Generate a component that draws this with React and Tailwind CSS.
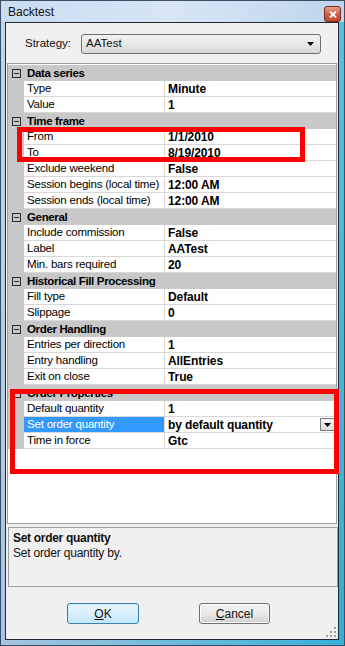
import React from 'react';

const sections = [
    { title: 'Data series', rows: [['Type', 'Minute'], ['Value', '1']] },
    {
        title: 'Time frame',
        rows: [
            ['From', '1/1/2010'],
            ['To', '8/19/2010'],
            ['Exclude weekend', 'False'],
            ['Session begins (local time)', '12:00 AM'],
            ['Session ends (local time)', '12:00 AM'],
        ],
    },
    { title: 'General', rows: [['Include commission', 'False'], ['Label', 'AATest'], ['Min. bars required', '20']] },
    { title: 'Historical Fill Processing', rows: [['Fill type', 'Default'], ['Slippage', '0']] },
    { title: 'Order Handling', rows: [['Entries per direction', '1'], ['Entry handling', 'AllEntries'], ['Exit on close', 'True']] },
    {
        title: 'Order Properties',
        rows: [['Default quantity', '1'], ['Set order quantity', 'by default quantity', true], ['Time in force', 'Gtc']],
    },
];

const CategoryRow = ({ title }) => (
    <div className="flex h-[16px] items-center bg-[#c8c8c8]">
        <div className="flex w-[16px] justify-center pl-[1px]">
            <div className="flex h-[9px] w-[9px] items-center justify-center border border-[#2b2b2b] bg-[#c8c8c8]">
                <div className="h-[1px] w-[5px] bg-[#2b2b2b]"></div>
            </div>
        </div>
        <span className="pl-[3px] pt-[1px] text-[11.5px] font-bold tracking-[-0.35px] text-black">{title}</span>
    </div>
);

const PropRow = ({ label, value, selected }) => (
    <div className="flex h-[16px]">
        <div className="w-[16px] bg-[#c8c8c8]"></div>
        <div
            className={`flex w-[140px] items-center border-b border-[#d8d8d8] pl-[3px] pt-[1px] text-[11.5px] tracking-[-0.2px] ${
                selected ? 'bg-[#3399ff] text-white' : 'bg-white text-black'
            }`}
        >
            {label}
        </div>
        <div className="w-[1px] bg-[#d8d8d8]"></div>
        <div className="flex flex-1 items-center justify-between border-b border-[#d8d8d8] bg-white pl-[3px] text-[12px] font-bold tracking-[-0.1px] text-black">
            <span className="pt-[1px]">{value}</span>
            {selected && (
                <div className="mr-[1px] flex h-[13px] w-[15px] items-center justify-center border border-[#7a7a7a] bg-gradient-to-b from-[#f4f4f4] to-[#dcdcdc]">
                    <svg width="7" height="4" viewBox="0 0 7 4">
                        <path d="M0 0h7L3.5 4z" fill="#000" />
                    </svg>
                </div>
            )}
        </div>
    </div>
);

const App = () => {
    return (
        <div
            className="relative flex h-[646px] w-[345px] flex-col overflow-hidden border border-[#3a4f66] bg-[#c4d9ee] text-black"
            style={{ fontFamily: '"Liberation Sans", Arial, sans-serif' }}
        >
            {/* title bar */}
            <div className="flex h-[21px] items-center justify-between bg-gradient-to-r from-[#c9dcf0] via-[#d8e6f4] to-[#bfd5ec] pl-[7px] pr-[3px]">
                <span className="text-[12px] text-[#111]">Backtest</span>
                <div className="mt-[5px] flex h-[16px] w-[17px] items-center justify-center rounded-[3px] border border-[#7a2a1a] bg-gradient-to-b from-[#e8a08c] via-[#d0604a] to-[#c24a30]">
                    <svg width="8" height="7" viewBox="0 0 8 7">
                        <path d="M1 0.5l6 6M7 0.5l-6 6" stroke="#fff" strokeWidth="1.8" />
                    </svg>
                </div>
            </div>

            <div className="flex flex-1">
                <div className="w-[4px] bg-gradient-to-b from-[#c0d6ec] to-[#a8c4de]"></div>

                {/* client area */}
                <div className="flex w-[334px] flex-col border border-[#1f2a36] bg-[#f0f0f0]">
                    {/* strategy */}
                    <div className="mt-[11px] flex h-[20px] items-center">
                        <span className="w-[75px] pl-[19px] text-[11.5px] text-[#111]">Strategy:</span>
                        <div className="flex h-[20px] w-[240px] items-center justify-between rounded-[3px] border border-[#707070] bg-gradient-to-b from-[#f3f3f3] via-[#e8e8e8] to-[#d8d8d8] pl-[4px] pr-[6px]">
                            <span className="text-[11.5px] text-[#111]">AATest</span>
                            <svg width="7" height="4" viewBox="0 0 7 4">
                                <path d="M0 0h7L3.5 4z" fill="#000" />
                            </svg>
                        </div>
                    </div>

                    {/* property grid */}
                    <div className="ml-[1px] mt-[9px] flex h-[461px] w-[330px] flex-col border border-[#a0a0a0] bg-white pt-[1px]">
                        {sections.map((s) => (
                            <React.Fragment key={s.title}>
                                <CategoryRow title={s.title} />
                                {s.rows.map(([label, value, selected]) => (
                                    <PropRow key={label} label={label} value={value} selected={selected} />
                                ))}
                            </React.Fragment>
                        ))}
                    </div>

                    {/* description */}
                    <div className="ml-[2px] mt-[3px] flex h-[60px] w-[330px] flex-col border border-[#a0a0a0] bg-[#f0f0f0] pl-[4px] pt-[3px]">
                        <span className="text-[12px] font-bold leading-[15px] tracking-[-0.3px] text-[#111]">Set order quantity</span>
                        <span className="text-[12px] leading-[15px] tracking-[-0.2px] text-[#111]">Set order quantity by.</span>
                    </div>

                    {/* buttons */}
                    <div className="mt-[16px] flex">
                        <button className="ml-[61px] flex h-[21px] w-[72px] items-center justify-center rounded-[3px] border border-[#3c7fb1] bg-gradient-to-b from-[#eaf6fd] via-[#d9f0fc] to-[#bee6fd] text-[12px] text-[#111] shadow-[inset_0_0_0_1px_#c5ecfc]">
                            <span>
                                <span className="underline">O</span>K
                            </span>
                        </button>
                        <button className="ml-[60px] flex h-[21px] w-[71px] items-center justify-center rounded-[3px] border border-[#707070] bg-gradient-to-b from-[#f2f2f2] via-[#ebebeb] to-[#cfcfcf] text-[12px] text-[#111] shadow-[inset_0_0_0_1px_#fbfbfb]">
                            <span>
                                <span className="underline">C</span>ancel
                            </span>
                        </button>
                    </div>

                    {/* size grip */}
                    <div className="mt-auto mb-[2px] mr-[2px] flex justify-end">
                        <svg width="10" height="10" viewBox="0 0 10 10">
                            <g fill="#a0a0a0">
                                <rect x="8" y="0" width="2" height="2" />
                                <rect x="4" y="4" width="2" height="2" />
                                <rect x="8" y="4" width="2" height="2" />
                                <rect x="0" y="8" width="2" height="2" />
                                <rect x="4" y="8" width="2" height="2" />
                                <rect x="8" y="8" width="2" height="2" />
                            </g>
                        </svg>
                    </div>
                </div>

                <div className="w-[5px] bg-gradient-to-b from-[#56c0e0] to-[#2eb0d6]"></div>
            </div>
            <div className="h-[5px] bg-gradient-to-r from-[#a8c4de] via-[#6cbcdc] to-[#30b2d8]"></div>

            {/* annotation boxes */}
            <div className="absolute left-[16px] top-[126px] h-[35px] w-[288px] border-[5px] border-[#ff0000]"></div>
            <div className="absolute left-[9px] top-[388px] h-[85px] w-[329px] border-[5px] border-[#ff0000]"></div>
        </div>
    );
};

export default App;
